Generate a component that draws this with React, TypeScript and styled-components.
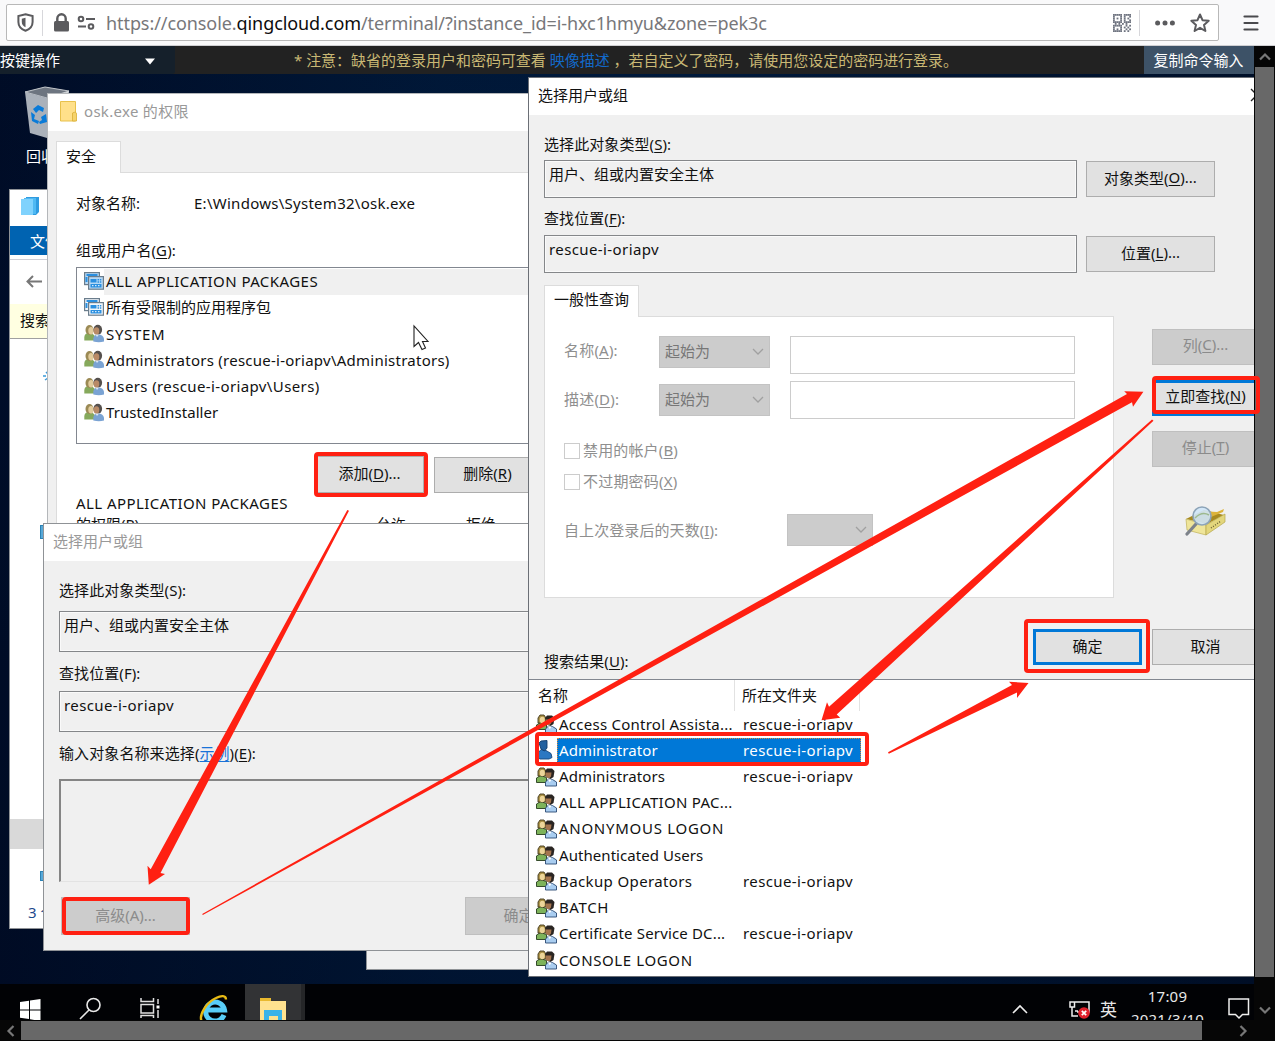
import React from "react";
import styled, { createGlobalStyle, css } from "styled-components";

const Global = createGlobalStyle`
  html, body { margin: 0; padding: 0; background: #000; overflow: hidden; }
  *, *::before, *::after { box-sizing: border-box; }
  body { font-family: "Noto Sans", "Noto Sans CJK SC", sans-serif; font-size: 15px; color: #111; }
`;

const red = "#ff2012";

/* ---------- shell ---------- */
const Page = styled.div`
  position: relative;
  width: 1275px;
  height: 1041px;
  display: flex;
  flex-direction: column;
  overflow: hidden;
  white-space: nowrap;
`;
const Toolbar = styled.header`
  height: 46px;
  flex: none;
  display: flex;
  align-items: center;
  padding: 0 16px 0 6px;
  background: #f9f9fa;
  border-bottom: 1px solid #cfcfd2;
`;
const UrlBar = styled.div`
  width: 1213px;
  height: 37px;
  display: flex;
  align-items: center;
  padding: 0 8px 0 10px;
  background: #fff;
  border: 1px solid #b8b8b8;
  border-radius: 2px;
`;
const Divider = styled.i<{ $m: string }>`
  width: 1px;
  height: 26px;
  margin: ${(p) => p.$m};
  background: #d7d7db;
`;
const Url = styled.span`
  flex: 1;
  margin-left: 10px;
  font-size: 18px;
  letter-spacing: -0.08px;
  color: #77777a;
  b { font-weight: 400; color: #0c0c0d; }
`;
const Below = styled.div`
  flex: 1;
  display: flex;
  min-height: 0;
`;
const Screen = styled.main`
  width: 1254px;
  height: 974px;
  display: flex;
  flex-direction: column;
  overflow: hidden;
`;
const Notice = styled.div`
  height: 28px;
  flex: none;
  display: flex;
  align-items: center;
  line-height: 28px;
  background: #222;
`;
const KeySelect = styled.div`
  width: 175px;
  height: 28px;
  display: flex;
  justify-content: space-between;
  align-items: center;
  padding-right: 20px;
  border-radius: 0 0 3px 0;
  background: #15202b;
  color: #fff;
`;
const NoticeText = styled.div`
  flex: 1;
  text-align: left;
  padding-left: 119px;
  letter-spacing: -0.02px;
  color: #c9b874;
  a { color: #1269c9; }
`;
const CopyButton = styled.div`
  width: 110px;
  height: 28px;
  padding-right: 1px;
  text-align: center;
  background: #3d5267;
  color: #fff;
`;
const Desktop = styled.section`
  position: relative;
  flex: 1;
  background: linear-gradient(180deg, rgba(0, 8, 28, 0.15) 0%, rgba(0, 8, 28, 0) 30%, rgba(0, 8, 28, 0.35) 100%),
    linear-gradient(90deg, #000d28 0%, #001a3c 35%, #001c40 55%, #00112b 100%);
  overflow: hidden;
`;
const VBar = styled.div`
  width: 21px;
  height: 974px;
  display: flex;
  flex-direction: column;
  align-items: center;
  background: #060606;
`;
const VThumb = styled.i`
  width: 19px;
  height: 910px;
  background: #686868;
`;
const BarArrow = styled.span`
  width: 21px;
  height: 21px;
  flex: none;
  display: flex;
  align-items: center;
  justify-content: center;
`;
const Push = styled.i`
  flex: 1;
`;
const HBar = styled.div`
  height: 21px;
  flex: none;
  display: flex;
  align-items: center;
  background: #060606;
`;
const HThumb = styled.i`
  width: 1181px;
  height: 19px;
  background: #686868;
`;

/* ---------- windows ---------- */
const Win = styled.div<{ $x: number; $y: number; $w: number; $h: number; $line?: string; $bg?: string }>`
  position: absolute;
  left: ${(p) => p.$x}px;
  top: ${(p) => p.$y}px;
  width: ${(p) => p.$w}px;
  height: ${(p) => p.$h}px;
  display: flex;
  flex-direction: column;
  border: 1px solid ${(p) => p.$line || "#8f9296"};
  background: ${(p) => p.$bg || "#f0f0f0"};
  overflow: hidden;
`;
const Title = styled.div<{ $dim?: boolean; $pl: number }>`
  height: 37px;
  flex: none;
  display: flex;
  align-items: center;
  padding: 0 0 3px ${(p) => p.$pl}px;
  background: #fff;
  color: ${(p) => (p.$dim ? "#999" : "#111")};
`;
const Row = styled.div<{ $h: number; $mt?: number; $pl?: number }>`
  height: ${(p) => p.$h}px;
  flex: none;
  display: flex;
  align-items: center;
  margin-top: ${(p) => p.$mt || 0}px;
  padding-left: ${(p) => p.$pl || 0}px;
`;
const T = styled.span<{ $ls?: number; $dim?: boolean; $w?: number; $c?: string; $lift?: number }>`
  flex: none;
  line-height: 22px;
  margin-top: ${(p) => -(p.$lift ?? 2)}px;
  letter-spacing: ${(p) => p.$ls || 0}px;
  color: ${(p) => p.$c || (p.$dim ? "#8f8f8f" : "inherit")};
  ${(p) => p.$w && css`width: ${p.$w}px;`}
  u { text-decoration-thickness: 1px; text-underline-offset: 2px; }
`;
const Field = styled.div<{ $w: number; $h: number; $ls?: number }>`
  flex: none;
  width: ${(p) => p.$w}px;
  height: ${(p) => p.$h}px;
  padding: 2px 0 0 4px;
  line-height: 23px;
  border: 1px solid #85878a;
  box-shadow: inset 0 0 0 1px #fafafa;
  letter-spacing: ${(p) => p.$ls || 0}px;
`;
const Btn = styled.div<{ $w: number; $h?: number; $off?: boolean; $focus?: boolean; $ml?: number }>`
  flex: none;
  width: ${(p) => p.$w}px;
  height: ${(p) => p.$h || 36}px;
  margin-left: ${(p) => p.$ml || 0}px;
  padding-bottom: 4px;
  display: flex;
  align-items: center;
  justify-content: center;
  border: ${(p) => (p.$focus ? "3px solid #0078d7" : "1px solid #adadad")};
  background: ${(p) => (p.$off ? "#ccc" : "#e1e1e1")};
  color: ${(p) => (p.$off ? "#8b8b8b" : "#111")};
  ${(p) => p.$off && css`border-color: #bfbfbf;`}
  u { text-decoration-thickness: 1px; text-underline-offset: 2px; }
`;
const Tab = styled.div<{ $w: number; $h: number; $pl: number }>`
  position: relative;
  z-index: 1;
  flex: none;
  width: ${(p) => p.$w}px;
  height: ${(p) => p.$h}px;
  margin-bottom: -1px;
  padding: 0 0 3px ${(p) => p.$pl}px;
  display: flex;
  align-items: center;
  background: #fff;
  border: 1px solid #dcdcdc;
  border-bottom: 0;
`;
const Panel = styled.div<{ $w: number; $h: number }>`
  flex: none;
  width: ${(p) => p.$w}px;
  height: ${(p) => p.$h}px;
  background: #fff;
  border: 1px solid #dcdcdc;
`;

/* ---------- explorer window ---------- */
const Ribbon = styled.div`
  height: 29px;
  padding-left: 20px;
  line-height: 30px;
  background: #0063b1;
  color: #fff;
`;
const NavBar = styled.div`
  height: 45px;
  margin-top: 4px;
  padding: 12px 0 0 16px;
  border-top: 1px solid #cfcfd6;
`;
const SearchTab = styled.div`
  height: 35px;
  padding-left: 10px;
  line-height: 33px;
  background: #ffffe1;
  border-bottom: 1px solid #a0a0a0;
`;
const Tree = styled.div`
  display: flex;
  flex-direction: column;
  align-items: flex-start;
`;
const Selected = styled.div`
  width: 100%;
  height: 30px;
  margin-top: 280px;
  background: #d9d9d9;
`;
const Chip = styled.i<{ $mt: number; $h: number }>`
  width: 10px;
  height: ${(p) => p.$h}px;
  margin: ${(p) => p.$mt}px 0 0 30px;
  background: #57a8d8;
  border: 1px solid #2b82b5;
`;

/* ---------- permissions list ---------- */
const PermPanel = styled(Panel)`
  padding-left: 19px;
  display: flex;
  flex-direction: column;
`;
const GroupList = styled.div`
  height: 177px;
  flex: none;
  margin-top: 4px;
  padding: 1px 0 0 7px;
  border: 1px solid #828790;
`;
const GroupRow = styled.div<{ $on?: boolean }>`
  height: 26.25px;
  display: flex;
  align-items: center;
  line-height: 25px;
  svg { flex: none; margin-top: -2px; }
  span { flex: 1; height: 26px; padding-left: 2px; background: ${(p) => (p.$on ? "#f0f0f0" : "none")}; }
`;
const NameBox = styled.div`
  width: 520px;
  height: 103px;
  flex: none;
  margin: 13px 0 0 15px;
  border: 1px solid #e3e3e3;
  border-top: 2px solid #858585;
  border-left: 2px solid #858585;
`;

/* ---------- query panel ---------- */
const Combo = styled.div<{ $w: number; $up?: boolean }>`
  width: ${(p) => p.$w}px;
  height: 32px;
  flex: none;
  display: flex;
  align-items: center;
  justify-content: space-between;
  margin-top: ${(p) => (p.$up ? -6 : 0)}px;
  padding: 0 5px;
  border: 1px solid #c3c3c3;
  background: #ccc;
  color: #777;
`;
const Input = styled.div`
  width: 285px;
  height: 38px;
  flex: none;
  margin-left: 20px;
  border: 1px solid #ccc;
  background: #fff;
`;
const Check = styled.i`
  width: 16px;
  height: 16px;
  margin-right: 3px;
  border: 1px solid #ccc;
  background: #fff;
`;
const Split = styled.div`
  display: flex;
  height: 313px;
  margin-top: 12px;
  padding-left: 15px;
`;
const TabColumn = styled.div`
  width: 569px;
  display: flex;
  flex-direction: column;
`;
const SideButtons = styled.div`
  margin-left: 39px;
  padding-top: 44px;
  display: flex;
  flex-direction: column;
  gap: 15px;
  ${Btn} { padding-bottom: 6px; }
  svg { margin: 23px 0 0 33px; }
`;

/* ---------- results ---------- */
const Results = styled.div`
  margin: 5px 0 0 0;
  height: 299px;
  flex: none;
  border-top: 1px solid #828790;
  background: #fff;
`;
const Head = styled.div`
  height: 31px;
  display: flex;
  align-items: center;
  padding-left: 9px;
`;
const HeadCell = styled.div<{ $w: number; $pl?: number }>`
  width: ${(p) => p.$w}px;
  padding-left: ${(p) => p.$pl || 0}px;
  height: 31px;
  line-height: 31px;
  border-right: 1px solid #e2e2e2;
`;
const ResRow = styled.div`
  height: 26.22px;
  display: flex;
  align-items: center;
  padding-left: 7px;
  svg { flex: none; }
`;
const ResText = styled.div<{ $on?: boolean }>`
  width: 304px;
  height: 25px;
  display: flex;
  padding-left: 2px;
  line-height: 25px;
  ${(p) => p.$on && css`background: #0078d7; color: #fff; outline: 1px dotted #e08a3a; outline-offset: -1px;`}
`;
const Name = styled.span<{ $ls: number }>`
  width: 184px;
  letter-spacing: ${(p) => p.$ls}px;
`;
const Folder = styled.span`
  letter-spacing: 0.4px;
`;

/* ---------- taskbar ---------- */
const Taskbar = styled.div`
  position: absolute;
  left: 0;
  top: 910px;
  width: 1254px;
  height: 60px;
  display: flex;
  background: #010205;
  color: #e8e8e8;
`;
const TaskItem = styled.div<{ $w: number; $on?: boolean }>`
  width: ${(p) => p.$w}px;
  height: 60px;
  flex: none;
  padding-top: 9px;
  display: flex;
  justify-content: center;
  background: ${(p) => (p.$on ? "#323335" : "none")};
  ${(p) => p.$on && css`border-right: 4px solid #252628;`}
`;
const Clock = styled.div`
  width: 90px;
  margin-left: -1px;
  padding: 1px 0 0 1px;
  text-align: center;
  line-height: 23px;
  letter-spacing: 0.2px;
`;
const Ime = styled.div`
  width: 30px;
  padding: 14px 0 0 1px;
  font-size: 17px;
  line-height: 24px;
  text-align: center;
`;
const Tray = styled.div<{ $w: number; $pt: number }>`
  width: ${(p) => p.$w}px;
  padding-top: ${(p) => p.$pt}px;
  flex: none;
  display: flex;
  justify-content: center;
  align-items: flex-start;
`;

const DeskIcon = styled.div`
  position: absolute;
  left: 22px;
  top: 10px;
  width: 60px;
  color: #fff;
  svg { display: block; }
  span { display: block; padding-left: 4px; margin-top: 5px; line-height: 22px; }
`;
const Overlay = styled.svg`
  position: absolute;
  left: 0;
  top: 0;
  pointer-events: none;
`;

/* ---------- icons ---------- */
const Arrow = ({ d, c = "#777" }: { d: string; c?: string }) => (
  <svg width="12" height="12" viewBox="0 0 12 12" fill="none" stroke={c} strokeWidth="2.2"><path d={d} /></svg>
);
const Chev = () => (
  <svg width="12" height="8" viewBox="0 0 12 8" fill="none" stroke="#a0a0a0" strokeWidth="1.3"><path d="M1 1l5 5 5-5" /></svg>
);
const Users = () => (
  <svg width="20" height="19" viewBox="0 0 20 19">
    <path d="M.3 16.500V13q.5-4 4.500-4t6 3v4.500z" fill="#86a95c" />
    <ellipse cx="5.500" cy="6" rx="4" ry="5" fill="#9b8a55" />
    <ellipse cx="7" cy="6.800" rx="2.700" ry="3.700" fill="#e2cc9c" />
    <path d="M9.300 17.500v-3q.5-4 5-4t5.700 4v3q-5 1.500-10.700 0z" fill="#7aa3d3" />
    <ellipse cx="13.800" cy="5.800" rx="4.300" ry="5" fill="#55504d" />
    <ellipse cx="12.500" cy="7" rx="2.800" ry="3.700" fill="#b98a66" />
    <path d="M11.500 10.500l1.500 2.500 2-2.500z" fill="#dde8f4" />
  </svg>
);
const Pair = () => (
  <svg width="21" height="20" viewBox="0 0 21 20">
    <path d="M.5 15.500V11l4-2.500 6 2v5z" fill="#7db35a" stroke="#263c1c" strokeWidth=".9" />
    <path d="M2 9V4l2-3h4l2 3v5z" fill="#a88e42" stroke="#443a1f" strokeWidth=".9" />
    <ellipse cx="6.300" cy="6" rx="2.500" ry="3.300" fill="#ecd59a" />
    <path d="M9 4l2-2.500h5l2.500 2.500-1 6-3 2-4-2z" fill="#2a2522" />
    <path d="M9.500 5.500h6l-.5 4-2 2-3-1.500z" fill="#a5754f" />
    <path d="M9.500 19v-4l3-3 4 .5 4 2.500v4z" fill="#a9cdf0" stroke="#2a4a73" strokeWidth=".9" />
    <path d="M12 12.300l1.800 3 1.800-2.800z" fill="#fff" />
  </svg>
);
const Single = () => (
  <svg width="21" height="20" viewBox="0 0 21 20">
    <path d="M2 17.500V13l3-3.500 5 1 5 3 1 4-3 1.500H4z" fill="#2c78c2" stroke="#15467c" strokeWidth=".9" />
    <path d="M3 3l2-2 6-.5v7.500L8.500 11 5 9z" fill="#23619f" stroke="#123c6b" strokeWidth=".9" />
  </svg>
);
const Pkg = ({ c }: { c: string }) => (
  <svg width="20" height="18" viewBox="0 0 20 18">
    <rect x=".6" y=".6" width="14.800" height="12" fill={c} stroke="#6b7d8c" strokeWidth="1.200" />
    <path d="M2.500 3h11M2.500 5v5" stroke="#2a8fe0" strokeWidth="2" />
    <rect x="4.600" y="4.600" width="14.800" height="12.600" fill={c} stroke="#6b7d8c" strokeWidth="1.200" />
    <rect x="6.500" y="7" width="6" height="3.500" fill="#2a8fe0" />
    <path d="M13.500 7.800h4M13.500 10h4" stroke="#2a8fe0" strokeWidth="1.400" strokeDasharray="1.500 .8" />
    <rect x="6.500" y="12" width="11" height="3.500" fill="#2a8fe0" />
    <path d="M8 13.700h8" stroke="#fff" strokeWidth="1" strokeDasharray="1.500 1.500" />
  </svg>
);
const qr = ["1111101111", "1000101001", "1010101010", "1000101001", "1111101111", "0101010100", "1111100101", "1000101010", "1010100101", "1111101010"];

const groups: [string, string, number][] = [
  ["app", "ALL APPLICATION PACKAGES", 0.44],
  ["app2", "所有受限制的应用程序包", 0],
  ["u", "SYSTEM", 0.65],
  ["u", "Administrators (rescue-i-oriapv\\Administrators)", 0.25],
  ["u", "Users (rescue-i-oriapv\\Users)", 0.38],
  ["u", "TrustedInstaller", 0.08],
];
const results: [string, boolean, number][] = [
  ["Access Control Assista...", true, 0.25],
  ["Administrator", true, 0.1],
  ["Administrators", true, 0.1],
  ["ALL APPLICATION PAC...", false, 0.28],
  ["ANONYMOUS LOGON", false, 0.72],
  ["Authenticated Users", false, 0.06],
  ["Backup Operators", true, 0.38],
  ["BATCH", false, 0.6],
  ["Certificate Service DC...", true, 0.16],
  ["CONSOLE LOGON", false, 0.62],
];

export default function App() {
  return (
    <Page>
      <Global />
      <Toolbar>
        <UrlBar>
          <svg width="17" height="19" viewBox="0 0 17 19" fill="none" stroke="#5b5b5e" strokeWidth="2">
            <path d="M8.500 1.200L15.600 3v6c0 4.500-3 7.300-7.100 8.800C4.400 16.300 1.400 13.500 1.400 9V3z" />
            <path d="M8.500 4.800v9.400C6 12.800 4.800 11.500 4.800 9V5.700z" fill="#5b5b5e" stroke="none" />
          </svg>
          <Divider $m="0 10px 0 8px" />
          <svg width="17" height="19" viewBox="0 0 17 19">
            <rect x="1" y="8" width="15" height="10.500" rx="1.500" fill="#5b5b5e" />
            <path d="M4.300 9V5.500a4.200 4.200 0 018.400 0V9" fill="none" stroke="#5b5b5e" strokeWidth="2.400" />
          </svg>
          <svg width="19" height="16" viewBox="0 0 19 16" fill="none" stroke="#5b5b5e" strokeWidth="2" style={{ marginLeft: 7 }}>
            <circle cx="4" cy="4" r="2.300" /><path d="M9 4h9M1 11.500h8" /><circle cx="14" cy="11.500" r="2.300" />
          </svg>
          <Url>https://console.<b>qingcloud.com</b>/terminal/?instance_id=i-hxc1hmyu&amp;zone=pek3c</Url>
          <svg width="18" height="18" viewBox="0 0 20 20" fill="#6f7480">
            {qr.map((r, y) => r.split("").map((v, x) => v === "1" && <rect key={`${x}-${y}`} x={x * 2} y={y * 2} width="2" height="2" />))}
          </svg>
          <Divider $m="0 15px 0 8px" />
          <svg width="20" height="6" viewBox="0 0 20 6" fill="#5b5b5e"><circle cx="2.600" cy="3" r="2.500" /><circle cx="10" cy="3" r="2.500" /><circle cx="17.400" cy="3" r="2.500" /></svg>
          <svg width="20" height="20" viewBox="0 0 20 20" fill="none" stroke="#5b5b5e" strokeWidth="2" strokeLinejoin="round" style={{ marginLeft: 15 }}>
            <path d="M10 1.500l2.500 5.700 6.200.6-4.700 4.100 1.400 6.100L10 14.800 4.600 18 6 11.900 1.300 7.800l6.200-.6z" />
          </svg>
        </UrlBar>
        <Push />
        <svg width="16" height="16" viewBox="0 0 16 16" stroke="#4a4a4d" strokeWidth="2.200" strokeLinecap="round"><path d="M1.500 1.500h13M1.500 8h13M1.500 14.500h13" /></svg>
      </Toolbar>

      <Below>
        <Screen>
          <Notice>
            <KeySelect><T $lift={0}>按键操作</T><svg width="10" height="7" viewBox="0 0 10 7" style={{ marginTop: 3 }}><path d="M0 .5h10L5 6.500z" fill="#fff" /></svg></KeySelect>
            <NoticeText>* 注意：缺省的登录用户和密码可查看 <a>映像描述</a> ，若自定义了密码，请使用您设定的密码进行登录。</NoticeText>
            <CopyButton>复制命令输入</CopyButton>
          </Notice>
          <Desktop>
            <DeskIcon>
              <svg width="50" height="56" viewBox="0 0 50 56">
                <path d="M3 8l20-5 24 4-22 7z" fill="#6d7580" stroke="#c4c8cc" />
                <path d="M3 8l22 6v40L8 49z" fill="#aab1ba" /><path d="M25 14l22-7-5 42-17 5z" fill="#d2d6da" />
                <path d="M11 25l5-4 6 3-1 4-4-2-3 3zM9 28l4 3-1 4 5 2-1 3-6-3zM19 33l5-3 1 8-7 2-1-2 3-2z" fill="#0a7bd8" />
              </svg>
              <span>回收站</span>
            </DeskIcon>

            <Win $x={9} $y={115} $w={360} $h={740} $bg="#fff">
              <Row $h={36} $pl={11}>
                <svg width="19" height="19" viewBox="0 0 19 19" style={{ marginTop: -4 }}>
                  <path d="M5 0h13v15l-3 3H5z" fill="#2f9be0" /><path d="M3 1h12v16H3z" fill="#4fb9f3" /><path d="M0 2h12v16H0z" fill="#7fd2fd" />
                </svg>
              </Row>
              <Ribbon>文件</Ribbon>
              <NavBar><svg width="16" height="18" viewBox="0 0 16 18" fill="none" stroke="#777" strokeWidth="2"><path d="M7 4L1.500 9.500 7 15M1.500 9.500H16" /></svg></NavBar>
              <SearchTab>搜索工具</SearchTab>
              <Tree>
                <svg width="12" height="12" viewBox="0 0 12 12" style={{ margin: "31px 0 0 32px" }}><path d="M1 6h3M4 2l2 2M3 10l3-2M6 0v12" stroke="#3a9ad9" strokeWidth="1.500" /></svg>
                <Chip $mt={143} $h={14} />
                <Selected />
                <Chip $mt={22} $h={10} />
                <Row $h={24} $mt={20} $pl={18}><T $c="#1e4a8c">3 个项目</T></Row>
              </Tree>
            </Win>

            <Win $x={366} $y={860} $w={300} $h={36} />

            <Win $x={47} $y={19} $w={600} $h={620} $line="#b4b7ba">
              <Title $dim $pl={12}>
                <svg width="17" height="21" viewBox="0 0 17 21"><path d="M.5 .5h15v19.500H.5z" fill="#ffe08a" stroke="#e8c14c" /><path d="M12.500 12q4-2 4 1v7h-4z" fill="#f6d36b" stroke="#d9ae35" strokeWidth=".8" /></svg>
                <T $ls={0.3} $lift={1} style={{ marginLeft: 7 }}>osk.exe 的权限</T>
              </Title>
              <Row $h={31} $mt={10} $pl={8}><Tab $w={65} $h={32} $pl={9}><T $lift={0}>安全</T></Tab></Row>
              <Row $h={430} $pl={8}>
                <PermPanel $w={600} $h={430}>
                  <Row $h={24} $mt={19}><T $w={118}>对象名称:</T><T $ls={0.27}>E:\Windows\System32\osk.exe</T></Row>
                  <Row $h={24} $mt={23}><T $ls={0.1}>组或用户名(<u>G</u>):</T></Row>
                  <GroupList>
                    {groups.map(([k, n, ls], i) => (
                      <GroupRow key={n} $on={i === 0}>
                        {k === "u" ? <Users /> : <Pkg c={k === "app" ? "#b7d9f5" : "#f2f6fa"} />}
                        <span style={{ letterSpacing: ls }}>{n}</span>
                      </GroupRow>
                    ))}
                  </GroupList>
                  <Row $h={37} $mt={12} $pl={239}><Btn $w={109} $h={37}>添加(<u>D</u>)...</Btn><Btn $w={107} $ml={10}>删除(<u>R</u>)</Btn></Row>
                  <Row $h={20} $mt={1}><T $ls={0.43}>ALL APPLICATION PACKAGES</T></Row>
                  <Row $h={20} $mt={1}><T $w={300}>的权限(P)</T><T $w={90}>允许</T><T>拒绝</T></Row>
                </PermPanel>
              </Row>
            </Win>

            <Win $x={43} $y={449} $w={600} $h={428}>
              <Title $dim $pl={9}><T $lift={0}>选择用户或组</T></Title>
              <Row $h={24} $mt={18} $pl={15}><T $ls={0.08}>选择此对象类型(S):</T></Row>
              <Row $h={41} $mt={8} $pl={15}><Field $w={534} $h={41}>用户、组或内置安全主体</Field></Row>
              <Row $h={24} $mt={10} $pl={15}><T $ls={0.08}>查找位置(F):</T></Row>
              <Row $h={41} $mt={5} $pl={15}><Field $w={534} $h={41} $ls={0.4}>rescue-i-oriapv</Field></Row>
              <Row $h={24} $mt={10} $pl={15}><T $ls={0.1}>输入对象名称来选择(<T $c="#1a73d8"><u>示例</u></T>)(<u>E</u>):</T></Row>
              <NameBox />
              <Row $h={38} $mt={15} $pl={17}><Btn $w={129} $h={38} $off>高级(A)...</Btn><Btn $w={107} $h={38} $ml={275} $off>确定</Btn></Row>
            </Win>

            <Win $x={528} $y={3} $w={760} $h={900} $line="#6b6f76">
              <Title $pl={9}><T $w={712} $lift={0}>选择用户或组</T><svg width="14" height="14" viewBox="0 0 14 14" stroke="#222" strokeWidth="1.300"><path d="M1 1l12 12M13 1L1 13" /></svg></Title>
              <Row $h={24} $mt={18} $pl={15}><T $ls={0.08}>选择此对象类型(<u>S</u>):</T></Row>
              <Row $h={38} $mt={3} $pl={15}><Field $w={533} $h={38}>用户、组或内置安全主体</Field><Btn $w={129} $ml={9}>对象类型(<u>O</u>)...</Btn></Row>
              <Row $h={24} $mt={9} $pl={15}><T $ls={0.08}>查找位置(<u>F</u>):</T></Row>
              <Row $h={38} $mt={4} $pl={15}><Field $w={533} $h={38} $ls={0.4}>rescue-i-oriapv</Field><Btn $w={129} $ml={9}>位置(<u>L</u>)...</Btn></Row>
              <Split>
                <TabColumn>
                  <Tab $w={95} $h={32} $pl={9}><T>一般性查询</T></Tab>
                  <Panel $w={570} $h={282}>
                    <Row $h={38} $mt={19} $pl={19}><T $dim $w={95} $ls={0.2} $lift={10}>名称(<u>A</u>):</T><Combo $w={111} $up><T>起始为</T><Chev /></Combo><Input /></Row>
                    <Row $h={38} $mt={7} $pl={19}><T $dim $w={95} $ls={0.2}>描述(<u>D</u>):</T><Combo $w={111}><T>起始为</T><Chev /></Combo><Input /></Row>
                    <Row $h={24} $mt={20} $pl={19}><Check /><T $dim $ls={0.15}>禁用的帐户(<u>B</u>)</T></Row>
                    <Row $h={24} $mt={7} $pl={19}><Check /><T $dim $ls={0.2}>不过期密码(<u>X</u>)</T></Row>
                    <Row $h={32} $mt={20} $pl={19}><T $dim $w={223} $ls={0.08} $lift={0}>自上次登录后的天数(<u>I</u>):</T><Combo $w={86}><i /><Chev /></Combo></Row>
                  </Panel>
                </TabColumn>
                <SideButtons>
                  <Btn $w={107} $off>列(<u>C</u>)...</Btn>
                  <Btn $w={107} $focus>立即查找(<u>N</u>)</Btn>
                  <Btn $w={107} $off>停止(<u>T</u>)</Btn>
                  <svg width="42" height="32" viewBox="0 0 42 32">
                    <path d="M1 14l18-9 20 5-17 9z" fill="#a88a20" /><path d="M16 6l16 1 7-3-1 3-12 5z" fill="#dcb33a" />
                    <path d="M1 14l20 6v10L2 25z" fill="#efe59a" stroke="#bfb057" strokeWidth=".7" />
                    <path d="M21 20l19-11v8L21 30z" fill="#e3d67c" stroke="#b5a64c" strokeWidth=".7" />
                    <path d="M26 23l10-7" stroke="#6d6536" strokeWidth="1.500" strokeDasharray="1 1.500" />
                    <path d="M11 19L2 29" stroke="#7d828a" strokeWidth="3.200" strokeLinecap="round" />
                    <circle cx="17" cy="11" r="9" fill="#cfe6f8" fillOpacity=".9" stroke="#8da4b8" strokeWidth="1.600" />
                    <path d="M10 13q7-7 14-3" stroke="#9db98f" strokeWidth="1.500" fill="none" />
                  </svg>
                </SideButtons>
              </Split>
              <Row $h={36} $mt={31} $pl={504}><Btn $w={109} $focus>确定</Btn><Btn $w={107} $ml={10}>取消</Btn></Row>
              <Row $h={24} $mt={-15} $pl={15}><T $ls={0.08}>搜索结果(<u>U</u>):</T></Row>
              <Results>
                <Head><HeadCell $w={197}>名称</HeadCell><HeadCell $w={125} $pl={7}>所在文件夹</HeadCell></Head>
                {results.map(([n, loc, ls], i) => (
                  <ResRow key={n}>
                    {i === 1 ? <Single /> : <Pair />}
                    <ResText $on={i === 1}><Name $ls={ls}>{n}</Name>{loc && <Folder>rescue-i-oriapv</Folder>}</ResText>
                  </ResRow>
                ))}
              </Results>
            </Win>

            <Taskbar>
              <TaskItem $w={60}><svg width="21" height="30" viewBox="0 0 21 30" fill="#fff" style={{ marginTop: 6 }}><path d="M0 3l9-1.300V10.500H0zM10 1.500L20.500 0v10.500H10zM0 11.500h9V20L0 18.800zM10 11.500h10.500V22L10 20.300z" /></svg></TaskItem>
              <TaskItem $w={60}><svg width="22" height="30" viewBox="0 0 22 30" fill="none" stroke="#e8e8e8" strokeWidth="1.600" style={{ marginTop: 4 }}><circle cx="14.500" cy="8" r="6.500" /><path d="M10 13L1 22" /></svg></TaskItem>
              <TaskItem $w={60}><svg width="20" height="24" viewBox="0 0 20 24" fill="none" stroke="#e0e0e0" strokeWidth="1.500" style={{ marginTop: 5 }}><path d="M1 0v3.500h12.500V0M1 6.500h12.500v8.500H1zM1 20v-2.500h12.500V20M18 1v5M18 12v8" /><path d="M16.500 7.500h3v3h-3z" fill="#fff" stroke="none" /></svg></TaskItem>
              <TaskItem $w={65}>
                <svg width="30" height="34" viewBox="0 0 30 34" fill="none">
                  <path d="M26 22A9.500 9.500 0 1 1 26.500 17H10" stroke="#58cdf8" strokeWidth="5" />
                  <path d="M4 29C0 22 9 9 18 5 23 2.500 28 2 28 6.500" stroke="#e9bb14" strokeWidth="2.400" />
                </svg>
              </TaskItem>
              <TaskItem $w={60} $on>
                <svg width="28" height="30" viewBox="0 0 28 30" style={{ marginTop: 4 }}><path d="M1 2h10l1 2h15v20H1z" fill="#ffe28f" /><path d="M1 1h11v3H1z" fill="#e9b92f" /><path d="M5 24V13h18v11h-4v-5h-9v5z" fill="#3bb3e8" /></svg>
              </TaskItem>
              <Push />
              <Tray $w={48} $pt={20}><svg width="16" height="10" viewBox="0 0 16 10" fill="none" stroke="#eee" strokeWidth="1.600" style={{ marginLeft: 2 }}><path d="M1 9l7-7 7 7" /></svg></Tray>
              <Tray $w={50} $pt={16}>
                <svg width="22" height="20" viewBox="0 0 22 20" fill="none" stroke="#eee" strokeWidth="1.500" style={{ marginLeft: 24 }}>
                  <path d="M6 2h14v10H8M1 2h4.500v5H1zM3 7v9h6M6 11h3" /><circle cx="15" cy="13" r="5.800" fill="#e0202c" stroke="none" /><path d="M12.800 10.800l4.400 4.400M17.200 10.800l-4.400 4.400" stroke="#fff" strokeWidth="1.700" />
                </svg>
              </Tray>
              <Ime>英</Ime>
              <Clock>17:09<br />2021/3/10</Clock>
              <Tray $w={42} $pt={14}><svg width="22" height="22" viewBox="0 0 22 22" fill="none" stroke="#eee" strokeWidth="1.500" style={{ marginLeft: 12 }}><path d="M1 1h19.500v15.500h-6L11 20l-3.500-3.500H1z" /></svg></Tray>
            </Taskbar>
          </Desktop>
        </Screen>
        <VBar>
          <BarArrow><Arrow d="M1 8.500l5-5 5 5" /></BarArrow>
          <VThumb />
          <Push />
          <BarArrow><Arrow d="M1 3.500l5 5 5-5" /></BarArrow>
        </VBar>
      </Below>
      <HBar>
        <BarArrow><Arrow d="M8.500 1l-5 5 5 5" /></BarArrow>
        <HThumb />
        <Push />
        <BarArrow style={{ marginRight: 22 }}><Arrow d="M3.500 1l5 5-5 5" /></BarArrow>
      </HBar>

      <Overlay width="1275" height="1041" viewBox="0 0 1275 1041">
        <path d="M414 326v20.500l4.500-4 3.500 7 3.500-1.500-3-6.500h5.500z" fill="#fff" stroke="#222" strokeWidth="1.100" />
        <g fill={red}>
          <path d="M347.300 510l1.700.8L160.500 873l4.500.9-16.200 10.800-1.300-19 3.200 3.600z" />
          <path d="M202.800 915l-.6-1L1127 394l-2.800-2.800 19.200.6L1133 406.800l-1-4.500z" />
          <path d="M1152 419.500l1.500 1.200L836.700 714.500l3.500 3.300-18.700 2.400 5.500-18 2 4.500z" />
          <path d="M888 752.200l.8 1.600L1017 692.500v5.500l11.500-15-19.500-1.300 3 3.300z" />
        </g>
        <g fill="none" stroke={red} strokeWidth="4">
          <rect x="316" y="454" width="110" height="41" rx="2" />
          <rect x="1154" y="378" width="104" height="34" rx="2" />
          <rect x="1026" y="621" width="122" height="50" rx="2" />
          <rect x="537" y="734" width="330" height="30" rx="2" />
          <rect x="64" y="899" width="124" height="34" rx="2" />
        </g>
      </Overlay>
    </Page>
  );
}
